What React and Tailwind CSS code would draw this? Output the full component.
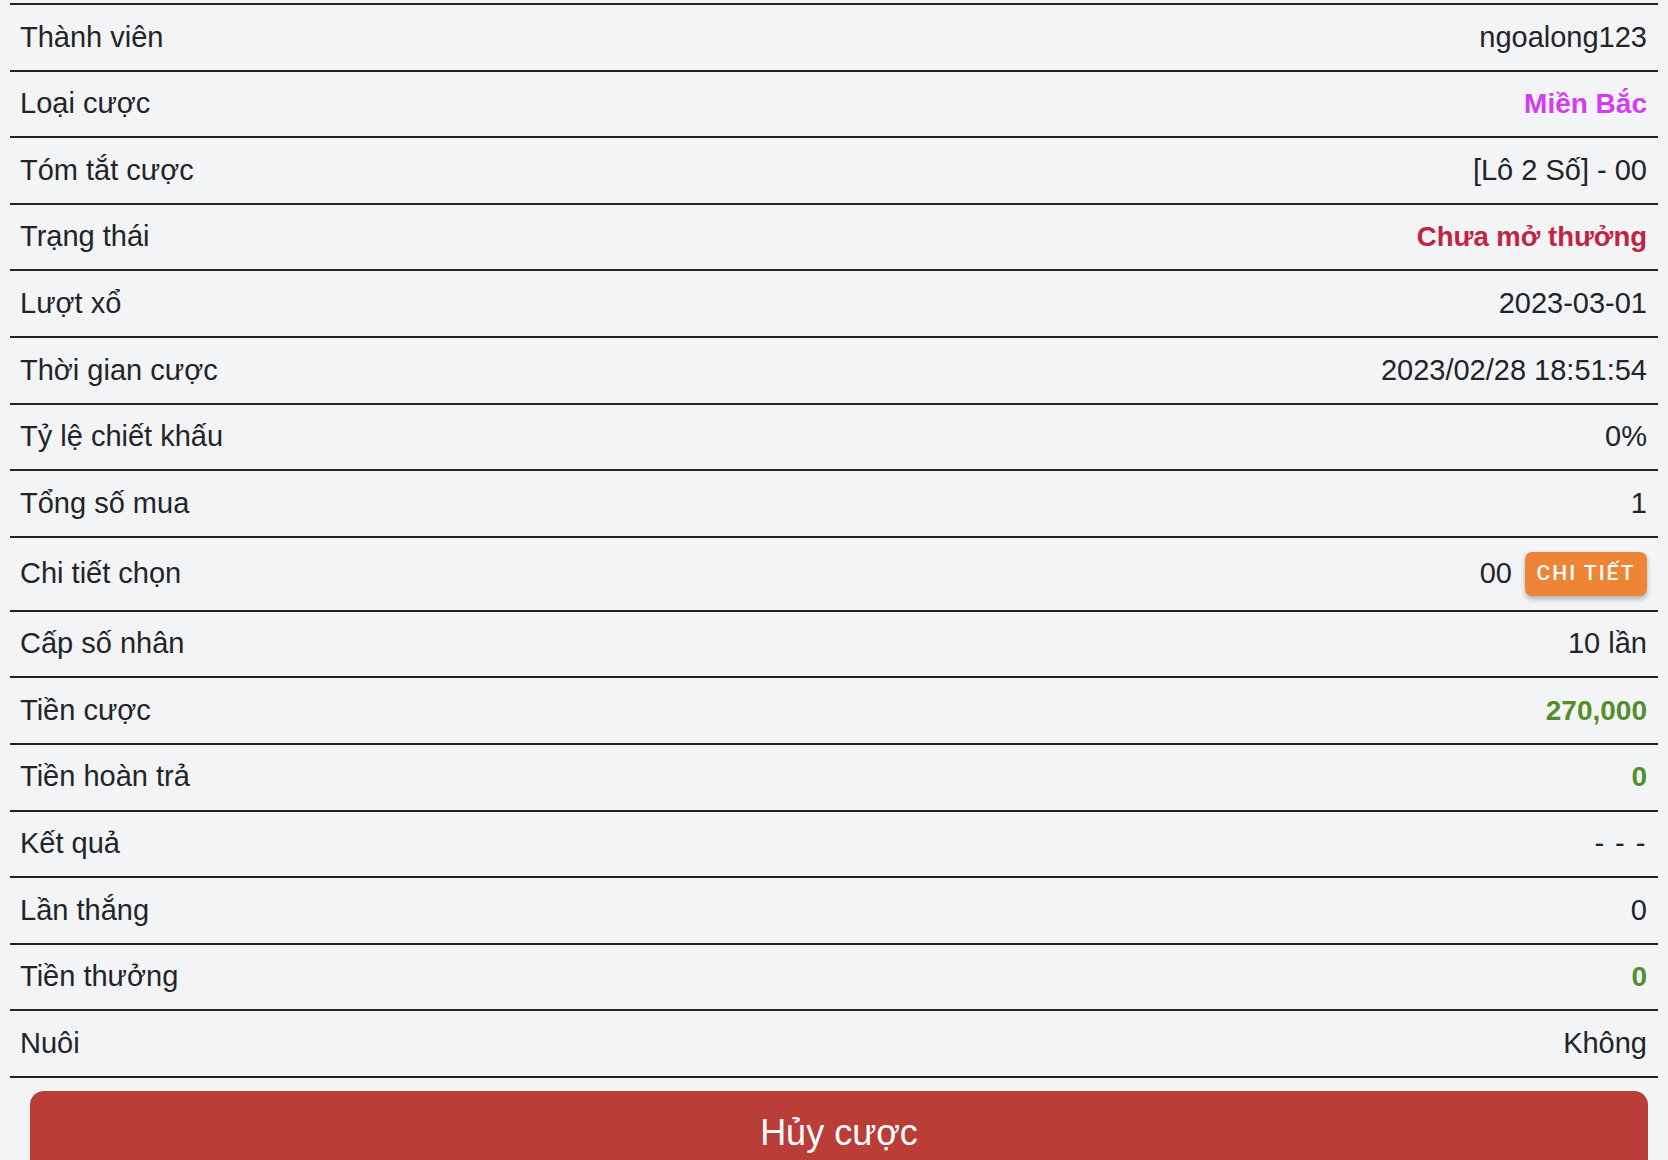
const rows = [
  { label: 'Thành viên', value: 'ngoalong123' },
  { label: 'Loại cược', value: 'Miền Bắc', tone: 'text-[28px] font-bold text-[#d53bf0]' },
  { label: 'Tóm tắt cược', value: '[Lô 2 Số] - 00' },
  { label: 'Trạng thái', value: 'Chưa mở thưởng', tone: 'text-[27.5px] font-bold text-[#bf2445]' },
  { label: 'Lượt xổ', value: '2023-03-01' },
  { label: 'Thời gian cược', value: '2023/02/28 18:51:54' },
  { label: 'Tỷ lệ chiết khấu', value: '0%' },
  { label: 'Tổng số mua', value: '1' },
  { label: 'Chi tiết chọn', value: '00', detail: true },
  { label: 'Cấp số nhân', value: '10 lần' },
  { label: 'Tiền cược', value: '270,000', tone: 'text-[28px] font-bold text-[#528f2c]' },
  { label: 'Tiền hoàn trả', value: '0', tone: 'text-[28px] font-bold text-[#528f2c]' },
  { label: 'Kết quả', value: '- - -', tone: 'text-[#222429] tracking-[1.5px]' },
  { label: 'Lần thắng', value: '0' },
  { label: 'Tiền thưởng', value: '0', tone: 'text-[28px] font-bold text-[#528f2c]' },
  { label: 'Nuôi', value: 'Không' },
];

function Row({ label, value, tone, detail }) {
  return (
    <div
      className={`flex items-center justify-between border-b-2 border-[#212226] pl-[10px] pr-[11px] ${
        detail ? 'h-[74px]' : 'h-[66.6px]'
      }`}
    >
      <span className="text-[#222429]">{label}</span>
      <div className="flex items-center gap-[13px]">
        <span className={tone || 'text-[#222429]'}>{value}</span>
        {detail && (
          <button className="flex h-[44px] w-[122px] items-center justify-center rounded-[7px] bg-[#ee8536] font-['Roboto',sans-serif] text-[21px] font-medium tracking-[2px] text-white shadow-[0_3px_5px_rgba(0,0,0,0.28)]">
            CHI TIẾT
          </button>
        )}
      </div>
    </div>
  );
}

export default function App() {
  return (
    <main className="h-[1160px] overflow-hidden bg-[#f3f4f6] pt-[3px] font-['Liberation_Sans',Arial,sans-serif] text-[29px]">
      <div className="mx-[10px] border-t-2 border-[#212226]">
        {rows.map((row) => (
          <Row key={row.label} {...row} />
        ))}
      </div>
      <div className="ml-[30px] mr-[20px] mt-[13px]">
        <button className="flex h-[84px] w-full items-center justify-center rounded-[14px] bg-[#ba3d37] text-[36px] text-white">
          Hủy cược
        </button>
      </div>
    </main>
  );
}
